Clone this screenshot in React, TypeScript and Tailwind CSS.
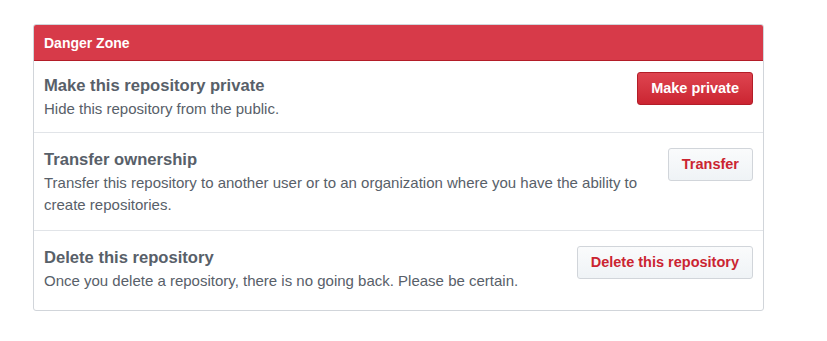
import { ReactNode } from 'react';

type DangerRowProps = {
  title: string;
  description: ReactNode;
  action: ReactNode;
  className: string;
};

function DangerRow({ title, description, action, className }: DangerRowProps) {
  return (
    <li className={`flex items-start justify-between gap-6 px-[10px] ${className}`}>
      <div className="min-w-0">
        <h4 className="text-[16.6px] font-bold leading-6 text-[#586069]">{title}</h4>
        <p className="text-[15px] leading-[22px] text-[#586069]">{description}</p>
      </div>
      <div className="shrink-0">{action}</div>
    </li>
  );
}

const dangerBtn =
  'h-[33px] rounded-[3px] border border-[#b31d28] bg-gradient-to-b from-[#de4450] to-[#cb2431] px-[13px] text-[14.5px] font-bold text-white';
const plainBtn =
  'h-[33px] rounded-[3px] border border-[#d1d5da] bg-gradient-to-b from-[#fafbfc] to-[#eff3f6] px-[13px] text-[14.5px] font-bold text-[#cb2431]';

export default function App() {
  return (
    <div
      className="min-h-screen bg-white pl-[33px] pt-6"
      style={{ fontFamily: '"Liberation Sans", Arial, sans-serif' }}
    >
      <div className="w-[731px] overflow-hidden rounded-[3px] border border-[#d1d5da]">
        {/* Header */}
        <div className="-mx-px -mt-px h-[37px] border border-[#b31d28] bg-[#d73a49] px-[10px] text-[14px] font-bold leading-[36px] text-white">
          Danger Zone
        </div>

        <ul>
          <DangerRow
            className="pt-[13px] pb-[12px]"
            title="Make this repository private"
            description="Hide this repository from the public."
            action={<button className={`${dangerBtn} -mt-[2px]`}>Make private</button>}
          />
          <DangerRow
            className="border-t border-[#e1e4e8] pt-[15px] pb-[14px]"
            title="Transfer ownership"
            description={
              <>
                Transfer this repository to another user or to an organization where you have the ability to
                <br />
                create repositories.
              </>
            }
            action={<button className={plainBtn}>Transfer</button>}
          />
          <DangerRow
            className="border-t border-[#e1e4e8] pt-[15px] pb-[18px]"
            title="Delete this repository"
            description="Once you delete a repository, there is no going back. Please be certain."
            action={<button className={plainBtn}>Delete this repository</button>}
          />
        </ul>
      </div>
    </div>
  );
}
